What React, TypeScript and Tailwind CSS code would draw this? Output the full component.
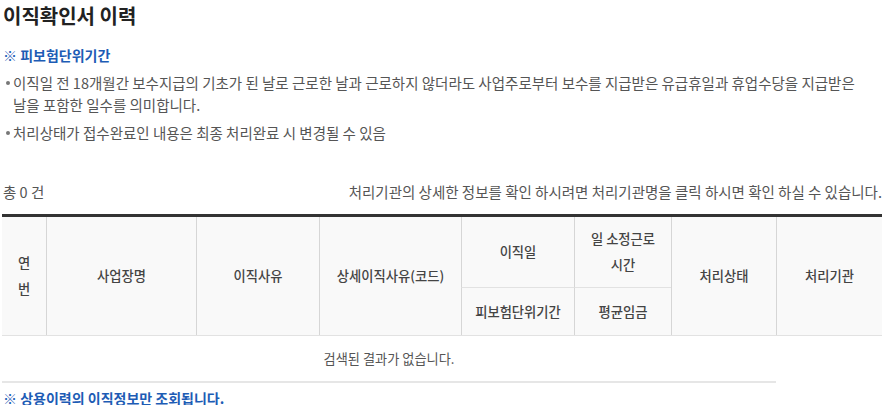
import React from "react";

const font = { fontFamily: '"Noto Sans CJK KR", "Noto Sans", sans-serif' };

function Bullet({ children }: { children: React.ReactNode }) {
  return (
    <li className="relative pl-[10px]">
      <span className="absolute left-[3px] top-[9px] h-[4px] w-[4px] rounded-full bg-[#777]" />
      {children}
    </li>
  );
}

function HeadCell({ children, className = "" }: { children: React.ReactNode; className?: string }) {
  return (
    <div className={`flex items-center justify-center text-center border-l border-[#d6d6d6] ${className}`}>
      {children}
    </div>
  );
}

export default function App() {
  return (
    <div className="h-[405px] w-[889px] overflow-hidden bg-white" style={font}>
      <div className="pl-[3px] pr-[7px]">
        <h2 className="text-[20px] font-bold leading-[32px] text-[#222]">이직확인서 이력</h2>

        <div className="mt-[13px] text-[14px] font-bold leading-[20px] text-[#1d5cb5]">※ 피보험단위기간</div>

        <ul className="mr-[17px] mt-[7px] space-y-[6px] text-[14.5px] leading-[22px] text-[#555]">
          <Bullet>
            이직일 전 18개월간 보수지급의 기초가 된 날로 근로한 날과 근로하지 않더라도 사업주로부터 보수를 지급받은 유급휴일과 휴업수당을 지급받은 날을 포함한 일수를 의미합니다.
          </Bullet>
          <Bullet>처리상태가 접수완료인 내용은 최종 처리완료 시 변경될 수 있음</Bullet>
        </ul>

        <div className="mt-[38px] flex items-center justify-between text-[14.5px] leading-[20px] text-[#555]">
          <span>총 0 건</span>
          <span>처리기관의 상세한 정보를 확인 하시려면 처리기관명을 클릭 하시면 확인 하실 수 있습니다.</span>
        </div>
      </div>

      <div className="ml-[2px] mt-[12px] w-[880px]">
        <div className="grid grid-cols-[44px_150px_123px_142px_113px_97px_105px_106px] grid-rows-[71px_47px] border-t-[3px] border-b border-t-[#333] border-b-[#e2e2e2] bg-[#f9f9f9] text-[13.3px] font-medium leading-[26px] text-[#444]">
          <HeadCell className="row-span-2 border-l-0">
            연<br />번
          </HeadCell>
          <HeadCell className="row-span-2">사업장명</HeadCell>
          <HeadCell className="row-span-2">이직사유</HeadCell>
          <HeadCell className="row-span-2">상세이직사유(코드)</HeadCell>
          <HeadCell className="border-b border-b-[#e2e2e2]">이직일</HeadCell>
          <HeadCell className="border-b border-b-[#e2e2e2] px-[12px]">일 소정근로 시간</HeadCell>
          <HeadCell className="row-span-2">처리상태</HeadCell>
          <HeadCell className="row-span-2">처리기관</HeadCell>
          <HeadCell className="col-start-5">피보험단위기간</HeadCell>
          <HeadCell>평균임금</HeadCell>
        </div>
        <div className="flex h-[47px] w-[774px] items-center justify-center border-b-2 border-[#e6e6e6] text-[13.2px] text-[#555]">
          검색된 결과가 없습니다.
        </div>
      </div>

      <div className="ml-[3px] mt-[5px] text-[14px] font-bold leading-[20px] text-[#1d5cb5]">※ 상용이력의 이직정보만 조회됩니다.</div>
    </div>
  );
}
